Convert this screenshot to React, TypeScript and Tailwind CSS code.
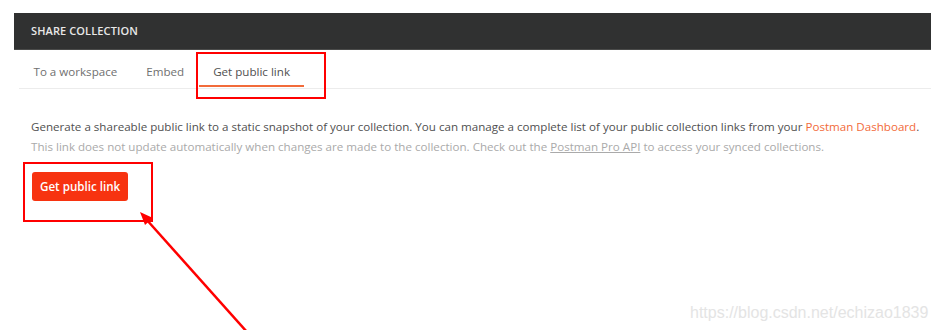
export default function App() {
  return (
    <div className="relative h-[330px] w-[936px] overflow-hidden bg-white font-['Open_Sans',sans-serif]">
      <div className="pl-[14px] pr-[5px] pt-[13px]">
        <div className="flex h-[37px] items-center border-b border-[#4a4b4a] bg-[#303131] pl-[17px]">
          <span className="text-[11px] font-semibold tracking-[0.01em] text-[#e8e8e8]">SHARE COLLECTION</span>
        </div>
        <div className="ml-[5px] flex h-[39px] items-stretch border-b border-[#ececec] text-[11.6px]">
          <div className="px-[14.5px] pt-[13px] text-[#707070]">To a workspace</div>
          <div className="px-[14.5px] pt-[13px] text-[#707070]">Embed</div>
          <div className="relative px-[14.5px] pt-[13px] text-[#505050]">
            Get public link
            <div className="absolute bottom-[1px] left-0 right-0 h-[2px] bg-[#f26b3a]" />
          </div>
        </div>
        <div className="pl-[17px] pt-[28px] text-[11.6px] leading-[20px]">
          <p className="whitespace-nowrap text-[#505050]">
            Generate a shareable public link to a static snapshot of your collection. You can manage a complete list of your public collection links from your{" "}
            <span className="text-[#f26b3a]">Postman Dashboard</span>.
          </p>
          <p className="whitespace-nowrap text-[#aaaaaa]">
            This link does not update automatically when changes are made to the collection. Check out the{" "}
            <span className="underline">Postman Pro API</span> to access your synced collections.
          </p>
          <button className="ml-[1px] mt-[15px] h-[29px] rounded-[3px] bg-[#f73310] px-[8px] text-[11.6px] font-semibold text-white">
            Get public link
          </button>
        </div>
      </div>

      <div className="absolute left-[196px] top-[52px] h-[47px] w-[130px] border-2 border-[#ff0000]" />
      <div className="absolute left-[23px] top-[162px] h-[60px] w-[130px] border-2 border-[#ff0000]" />
      <svg className="absolute left-0 top-0" width="936" height="330">
        <line x1="247" y1="332" x2="146" y2="219" stroke="#ff0000" strokeWidth="2.5" />
        <polygon points="140,212 153,218 145,225" fill="#ff0000" />
      </svg>
      <span className="absolute left-[690px] top-[301px] font-['Liberation_Sans',sans-serif] text-[16px] text-[#e4e4e4]">
        https://blog.csdn.net/echizao1839
      </span>
    </div>
  );
}
